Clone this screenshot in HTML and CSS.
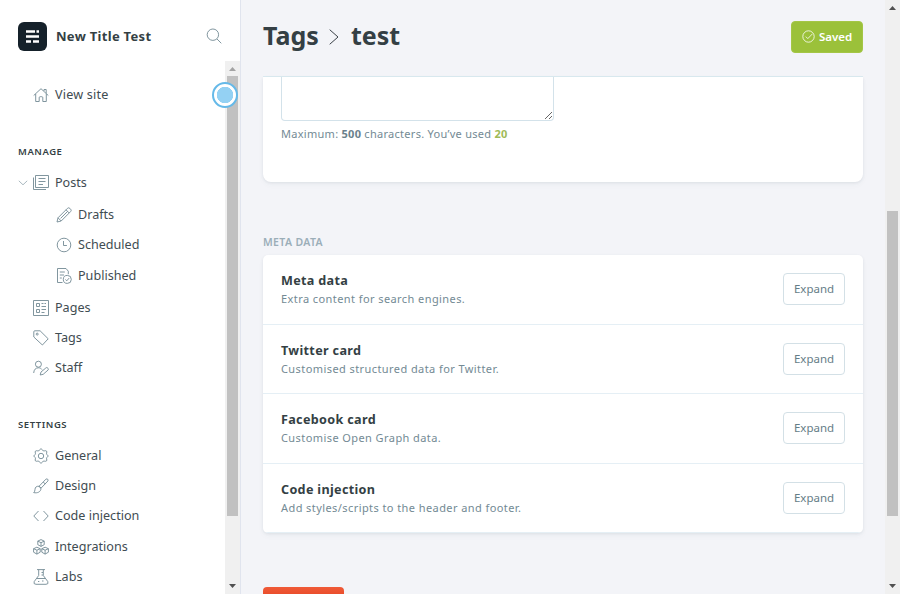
FILE: index.html
```html
<!DOCTYPE html>
<html lang="en">
<head>
<meta charset="utf-8">
<title>Tags - New Title Test</title>
<link rel="stylesheet" href="styles.css">
</head>
<body>
<div class="app">
  <nav class="sidebar">
    <header class="site">
      <svg class="logo" viewBox="0 0 29 29"><rect width="29" height="29" rx="6" fill="#15212a"/><path d="M8 9.500h9M18.500 9.500h2.500M8 14.500h13M8 19.500h5M15 19.500h6" stroke="#fff" stroke-width="2.600"/></svg>
      <strong class="site-name">New Title Test</strong>
      <svg class="icon" viewBox="0 0 16 16"><circle cx="6.900" cy="6.700" r="5.700"/><path d="M11 11l4.300 4.300"/></svg>
    </header>
    <div class="nav-scroll">
      <div class="nav-list">
        <a class="item"><svg class="icon" viewBox="0 0 16 16"><path d="M.7 8.500L8 1.700l7.300 6.800M2.700 7v7.500h3.500v-3.800q0-1 1-1h1.600q1 0 1 1v3.800h3.500V7M11 4V2.500h2.200v4"/></svg><span class="spaced">View site</span></a>
        <h2 class="group">Manage</h2>
        <a class="item posts"><svg class="chevron" viewBox="0 0 10 6"><path d="M.8.8L5 4.800 9.200.8"/></svg><svg class="icon" viewBox="0 0 16 16"><path d="M2.500.5h13v12h-13zM.5 2.500v12h12.500M5.500 3.500h7M5.500 6.500h7M5.500 9.500h4.500"/></svg><span>Posts</span></a>
        <a class="item sub"><svg class="icon" viewBox="0 0 16 16"><path d="M1 15l1-4.200L11.400 1.400a1.800 1.800 0 0 1 2.500 0l.7.7a1.800 1.800 0 0 1 0 2.500L5.200 14zM2 10.800L5.200 14M10 2.800L13.200 6M4.600 11.400l7-7"/></svg><span>Drafts</span></a>
        <a class="item sub"><svg class="icon" viewBox="0 0 16 16"><circle cx="8" cy="8" r="6.800"/><path d="M7.500 4v4.500h3.400"/></svg><span>Scheduled</span></a>
        <a class="item sub published"><svg class="icon" viewBox="0 0 16 16"><path d="M6.500 14.500H1.500V.5h8.500L12.300 3.200v3M3.800 4h5M3.800 7h4.200M3.800 10h2"/><circle cx="11.300" cy="11.400" r="4"/><path d="M9.400 11.500l1.400 1.300 2.300-2.700"/></svg><span>Published</span></a>
        <a class="item pages"><svg class="icon" viewBox="0 0 16 16"><path d="M.5.5h15v15H.5zM3.500 3.500h3v3h-3zM3.500 9.500h3v3h-3zM8.500 3.500h2M8.500 6.500h4.500M11.500 3.500h1.500M8.500 9.500h4.500M8.500 12.500h3"/></svg><span>Pages</span></a>
        <a class="item"><svg class="icon" viewBox="0 0 16 16"><path d="M.8 1.800q0-1 1-1h5.300l8.100 8-5.800 6.200L.8 7z"/><circle cx="4.200" cy="4.100" r="1"/></svg><span>Tags</span></a>
        <a class="item"><svg class="icon" viewBox="0 0 16 16"><circle cx="5.400" cy="4.200" r="3"/><path d="M.7 13c.2-3.400 2-5.200 4.700-5.200 1.700 0 2.800.6 3.500 1.700M7.200 15l.8-3 4.800-4a1.300 1.300 0 0 1 1.900 0l.3.3a1.300 1.300 0 0 1 0 1.800l-4.800 4.200z"/></svg><span>Staff</span></a>
        <h2 class="group settings">Settings</h2>
        <a class="item"><svg class="icon" viewBox="0 0 16 16"><path d="M6.300 2.100Q8-.8 9.700 2.100Q10 3.200 11.200 2.900Q14.600 2 13.600 5.300Q13 6.300 14 6.700Q16.800 8 14 9.300Q13 9.700 13.600 10.700Q14.600 14 11.200 13.100Q10 12.800 9.700 13.900Q8 16.800 6.300 13.900Q6 12.800 4.800 13.100Q1.400 14 2.400 10.700Q3 9.700 2 9.300Q-.8 8 2 6.700Q3 6.300 2.400 5.300Q1.400 2 4.800 2.900Q6 3.200 6.300 2.100z"/><circle cx="8" cy="8" r="2.700"/></svg><span>General</span></a>
        <a class="item"><svg class="icon" viewBox="0 0 16 16"><path d="M6 8.300L12.900 1.200c1.200-1 2.900.5 2 1.800L8 10.200zM10.300 4l2 2.100M6 8.300C3.600 7.900 2 9.300 2 11.400c0 1.500-.5 2.500-1.300 3.200 3.600.8 7.300-.6 7.300-4.400z"/></svg><span>Design</span></a>
        <a class="item"><svg class="icon" viewBox="0 0 16 16"><path d="M5.500 3L.8 8l4.700 5M10.500 3l4.700 5-4.700 5"/></svg><span>Code injection</span></a>
        <a class="item integrations"><svg class="icon" viewBox="0 0 16 16"><path d="M8 .6l3.200 1.500v3.600L8 7.400 4.800 5.700V2.100zM4.800 2.100L8 3.700l3.200-1.600M8 3.700v3.700M3.900 8.200l3.300 1.500v3.500l-3.300 1.900-3.300-1.900V9.700zM.6 9.700l3.300 1.500 3.300-1.500M3.900 11.200v3.900M12.100 8.200l3.300 1.500v3.500l-3.300 1.900-3.300-1.900V9.700zM8.800 9.700l3.300 1.500 3.300-1.500M12.100 11.200v3.900"/></svg><span>Integrations</span></a>
        <a class="item"><svg class="icon" viewBox="0 0 16 16"><path d="M4 .6h8M5.700.6v5.900L1.200 12.600Q.2 15.300 3 15.300h10q2.800 0 1.800-2.700L10.300 6.500V.6M4 9.500h8M8.500 3.500H10M5 12.500h1.300M9 12h1.500M8.500 6H10"/></svg><span>Labs</span></a>
      </div>
      <div class="scrollbar"><i class="arrow up dim"></i><div class="thumb nav-thumb"></div><i class="arrow down"></i></div>
    </div>
    <div class="pointer"></div>
  </nav>
  <main class="content">
    <header class="page-head">
      <h1><span class="crumb">Tags</span><svg class="sep" viewBox="0 0 10 16"><path d="M.7.7l8.300 7.300-8.300 7.300"/></svg><span>test</span></h1>
      <button class="saved"><svg viewBox="0 0 13 13"><circle cx="6.500" cy="6.500" r="5.700"/><path d="M3.800 6.600l2 2 4.600-4.700"/></svg><span>Saved</span></button>
    </header>
    <section class="panel basics">
      <textarea aria-label="Description"></textarea>
      <p>Maximum: <b>500</b> characters. You’ve used <b class="count">20</b></p>
    </section>
    <h3>Meta data</h3>
    <section class="panel expanders">
      <div class="row"><div><h4>Meta data</h4><p>Extra content for search engines.</p></div><button>Expand</button></div>
      <div class="row"><div><h4>Twitter card</h4><p>Customised structured data for Twitter.</p></div><button>Expand</button></div>
      <div class="row"><div><h4>Facebook card</h4><p>Customise Open Graph data.</p></div><button>Expand</button></div>
      <div class="row"><div><h4>Code injection</h4><p>Add styles/scripts to the header and footer.</p></div><button>Expand</button></div>
    </section>
    <button class="delete" aria-label="Delete tag"></button>
  </main>
  <div class="scrollbar page-scroll"><i class="arrow up"></i><div class="thumb page-thumb"></div><i class="arrow down"></i></div>
</div>
</body>
</html>
```
FILE: styles.css
```css
* { box-sizing: border-box; }
body { margin: 0; overflow: hidden; font-family: "Noto Sans", "Open Sans", sans-serif; color: #394047; }
h1, h2, h3, h4, p { margin: 0; }
button { font-family: inherit; }
.app { display: flex; width: 900px; height: 594px; overflow: hidden; background: #f3f4f8; }

.sidebar { position: relative; display: flex; flex-direction: column; flex: none; width: 241px; background: #fff; border-right: 1px solid #e0e4ee; }
.site { display: flex; align-items: center; height: 61px; padding: 12px 18px 0; flex: none; }
.logo { width: 29px; height: 29px; margin-right: 9px; }
.site-name { flex: 1; margin-top: -2px; font-size: 13px; line-height: 20px; color: #343f44; letter-spacing: .3px; white-space: nowrap; }
.icon { flex: none; width: 16px; height: 16px; margin-top: -1px; fill: none; stroke: #738a94; stroke-width: .9; stroke-linejoin: round; }
.nav-scroll { display: flex; flex: 1; min-height: 0; }
.nav-list { flex: 1; padding-top: 18px; }
.item { display: flex; align-items: center; height: 30.2px; padding-left: 33px; font-size: 12.6px; color: #3f4c52; white-space: nowrap; }
.item .icon { margin: 1px 6.500px 0 -.5px; }
.spaced { letter-spacing: .2px; }
.group { height: 20px; line-height: 20px; padding-left: 18px; margin-top: 33px; margin-bottom: 4.500px; font-size: 9.500px; font-weight: 600; text-transform: uppercase; letter-spacing: .55px; color: #343f44; }
.settings { margin-top: 32px; margin-bottom: 5px; }
.posts { padding-left: 18px; height: 32.500px; }
.sub { padding-left: 56px; }
.published { height: 32px; }
.pages { height: 31px; }
.integrations { height: 31px; }
.chevron { width: 10px; height: 6px; margin-right: 5px; fill: none; stroke: #9fb0b8; stroke-width: .9; }
.pointer { position: absolute; left: 212px; top: 82px; width: 26px; height: 26px; border: 2px solid #65b9e8; border-radius: 50%; background: radial-gradient(circle, #94d1f3 0 8px, #fff 8.500px); }

.scrollbar { display: flex; flex-direction: column; align-items: center; flex: none; width: 15px; background: #f0f0f0; }
.thumb { width: 11px; background: #c1c1c1; }
.nav-thumb { height: 440px; margin-bottom: auto; }
.page-thumb { height: 305px; margin: 196px 0 auto; }
.arrow { flex: none; width: 15px; height: 15px; padding: 6px 4px; }
.arrow::before { content: ""; display: block; width: 7px; height: 4px; background: #505050; }
.up::before { clip-path: polygon(50% 0, 100% 100%, 0 100%); }
.down::before { clip-path: polygon(0 0, 100% 0, 50% 100%); }
.down { padding-top: 5px; }
.dim::before { background: #a3a3a3; }

.content { flex: 1; min-width: 0; padding: 0 22px; }
.page-head { display: flex; align-items: center; justify-content: space-between; width: 600px; height: 77px; padding-bottom: 3px; border-bottom: 1px solid #dcebf1; }
h1 { display: flex; align-items: center; margin-top: -4px; font-size: 25px; line-height: 32px; font-weight: 700; color: #343f44; }
.sep { width: 10px; height: 16px; margin: 5px 12px 0 11px; fill: none; stroke: #394047; stroke-width: 1; }
.crumb { width: 55px; }
.saved { display: flex; align-items: center; width: 72px; height: 32px; padding: 0 0 0 10px; border: 1px solid #a4c646; border-radius: 4px; background: #9bc13a; color: #fff; font-size: 11.500px; font-weight: 600; }
.saved svg { width: 13px; height: 13px; margin-right: 4px; fill: none; stroke: #fff; stroke-width: .8; }
.panel { width: 600px; background: #fff; box-shadow: 0 1px 3px rgba(60, 80, 100, .1), 0 3px 6px rgba(60, 80, 100, .03); }
.basics { height: 105px; padding: 0 18px; border-radius: 0 0 8px 8px; }
textarea { display: block; width: 273px; height: 44px; border: 1px solid #d3e2ea; border-top: 0; border-radius: 0 0 4px 4px; resize: vertical; background: #fff; outline: 0; }
.basics p { margin-top: 3px; font-size: 11px; line-height: 20px; letter-spacing: .28px; color: #738a94; white-space: nowrap; }
.basics b { color: #6a818c; }
.basics .count { color: #9fbb58; }
h3 { height: 20px; margin-top: 50px; margin-bottom: 3px; line-height: 20px; font-size: 10.500px; font-weight: 600; letter-spacing: .35px; text-transform: uppercase; color: #9baeb8; }
.expanders { height: 278px; border-radius: 5px; overflow: hidden; }
.row { display: flex; align-items: flex-start; justify-content: space-between; height: 69.500px; padding: 18px 18px 0; border-bottom: 1px solid #e5eff5; }
h4 { margin-top: -2px; font-size: 12.600px; line-height: 19px; letter-spacing: .33px; color: #343f44; white-space: nowrap; }
.row p { font-size: 11px; line-height: 17px; letter-spacing: .42px; color: #738a94; white-space: nowrap; }
.row button { width: 62px; height: 32px; padding: 0 0 1px; border: 1px solid #d3e0e6; border-radius: 4px; background: #fff; font-size: 11.500px; color: #667d87; }
.delete { display: block; width: 81px; height: 32px; margin-top: 54px; border: 0; border-radius: 4px; background: linear-gradient(#ef5a38, #e84a27 30%); }
```
